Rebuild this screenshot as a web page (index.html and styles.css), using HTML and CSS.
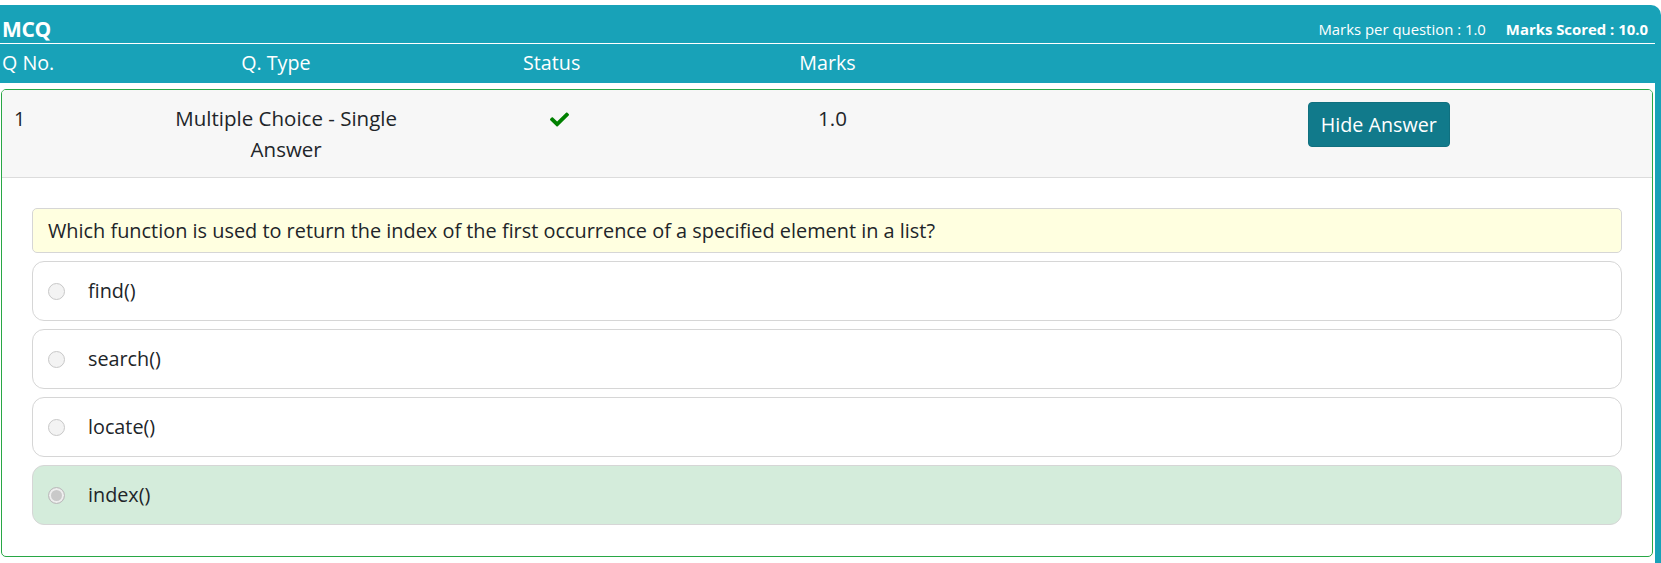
FILE: index.html
```html
<!DOCTYPE html>
<html lang="en">
<head>
<meta charset="utf-8">
<title>MCQ</title>
<link rel="stylesheet" href="styles.css">
</head>
<body>
<div class="panel">
  <div class="panel-head">
    <div class="title-row">
      <span class="title">MCQ</span>
      <span class="marks-info"><span class="per-q">Marks per question : 1.0</span><b class="scored">Marks Scored : 10.0</b></span>
    </div>
    <div class="cols-row">
      <span class="c-no">Q No.</span>
      <span class="c-type">Q. Type</span>
      <span class="c-status">Status</span>
      <span class="c-marks">Marks</span>
    </div>
  </div>
  <div class="panel-body">
    <div class="qcard">
      <div class="qrow">
        <span class="c-no">1</span>
        <span class="c-type">Multiple Choice - Single Answer</span>
        <span class="c-status"><svg class="check" viewBox="0 0 512 512" width="19" height="19"><path fill="#008000" d="M173.898 439.404l-166.4-166.4c-9.997-9.997-9.997-26.206 0-36.204l36.203-36.204c9.997-9.998 26.207-9.998 36.204 0L192 312.69 432.095 72.596c9.997-9.997 26.207-9.997 36.204 0l36.203 36.204c9.997 9.997 9.997 26.206 0 36.204l-294.4 294.401c-9.998 9.997-26.207 9.997-36.204-.001z"/></svg></span>
        <span class="c-marks">1.0</span>
        <span class="c-btn"><button class="btn-hide" type="button">Hide Answer</button></span>
      </div>
      <div class="qbody">
        <div class="question">Which function is used to return the index of the first occurrence of a specified element in a list?</div>
        <div class="option"><span class="radio"></span><span class="opt-text">find()</span></div>
        <div class="option"><span class="radio"></span><span class="opt-text">search()</span></div>
        <div class="option"><span class="radio"></span><span class="opt-text">locate()</span></div>
        <div class="option correct"><span class="radio checked"></span><span class="opt-text">index()</span></div>
      </div>
    </div>
  </div>
</div>
</body>
</html>
```
FILE: styles.css
```css
* { box-sizing: border-box; }
html, body { margin: 0; padding: 0; background: #fff; }
body {
  font-family: "Open Sans", "Noto Sans", sans-serif;
  color: #212529;
  height: 563px;
  overflow: hidden;
}
.panel {
  margin-top: 5px;
  background: #18a2b8;
  border-top-right-radius: 10px;
  padding-right: 6px;
}
.panel-head { color: #fff; }
.title-row {
  height: 39px;
  border-bottom: 1px solid #fff;
  display: flex;
  justify-content: space-between;
  align-items: flex-end;
  padding: 0 7px 1px 2px;
}
.title { font-weight: 700; font-size: 21px; line-height: 26px; letter-spacing: -0.3px; }
.marks-info { font-size: 14.9px; line-height: 20px; padding-bottom: 3px; }
.scored { margin-left: 20px; font-weight: 700; }
.cols-row {
  height: 39px;
  display: grid;
  grid-template-columns: repeat(12, 1fr);
  align-items: center;
  font-size: 19.7px;
  padding-bottom: 3px;
}
.c-no { grid-column: 1 / 2; padding-left: 2px; }
.c-type { grid-column: 2 / 4; text-align: center; }
.c-status { grid-column: 4 / 6; text-align: center; }
.c-marks { grid-column: 6 / 8; text-align: center; }
.c-btn { grid-column: 10 / 12; text-align: center; }
.panel-body {
  background: #fff;
  padding: 6px 2px 7px 1px;
}
.qcard {
  border: 1px solid #28a745;
  border-radius: 5px;
  overflow: hidden;
}
.qrow {
  display: grid;
  grid-template-columns: repeat(12, 1fr);
  align-items: start;
  background: #f7f7f7;
  border-bottom: 1px solid #dcdcdc;
  padding: 13px 0 12px 11px;
  font-size: 20.5px;
  line-height: 31px;
  min-height: 88px;
}
.qrow .c-no { padding-left: 1px; font-size: 19.6px; }
.check { vertical-align: -3px; }
.btn-hide {
  margin-top: -1px;
  font-family: inherit;
  font-size: 19.7px;
  line-height: 27px;
  color: #fff;
  background: #117a8b;
  border: 1px solid #10707f;
  border-radius: 4px;
  padding: 8px 12px;
}
.qbody {
  padding: 30px 30px 31px 30px;
  display: flex;
  flex-direction: column;
  gap: 8px;
}
.question {
  background: #ffffe0;
  border: 1px solid #d6d6d6;
  border-radius: 5px;
  height: 45px;
  display: flex;
  align-items: center;
  padding: 0 15px;
  font-size: 19.9px;
}
.option {
  height: 60px;
  border: 1px solid #d6d6d6;
  border-radius: 12px;
  background: #fff;
  display: flex;
  align-items: center;
  padding-left: 15px;
  font-size: 19.8px;
}
.option.correct { background: #d4ecdb; }
.radio {
  width: 17px;
  height: 17px;
  border-radius: 50%;
  border: 1px solid #c8c8c8;
  background: #f3f3f3;
  margin-right: 23px;
  flex: none;
}
.radio.checked {
  background: #c9c9c9;
  box-shadow: inset 0 0 0 2px #eeeeee;
  border-color: #bdbdbd;
}
.opt-text { line-height: 24px; }
```
